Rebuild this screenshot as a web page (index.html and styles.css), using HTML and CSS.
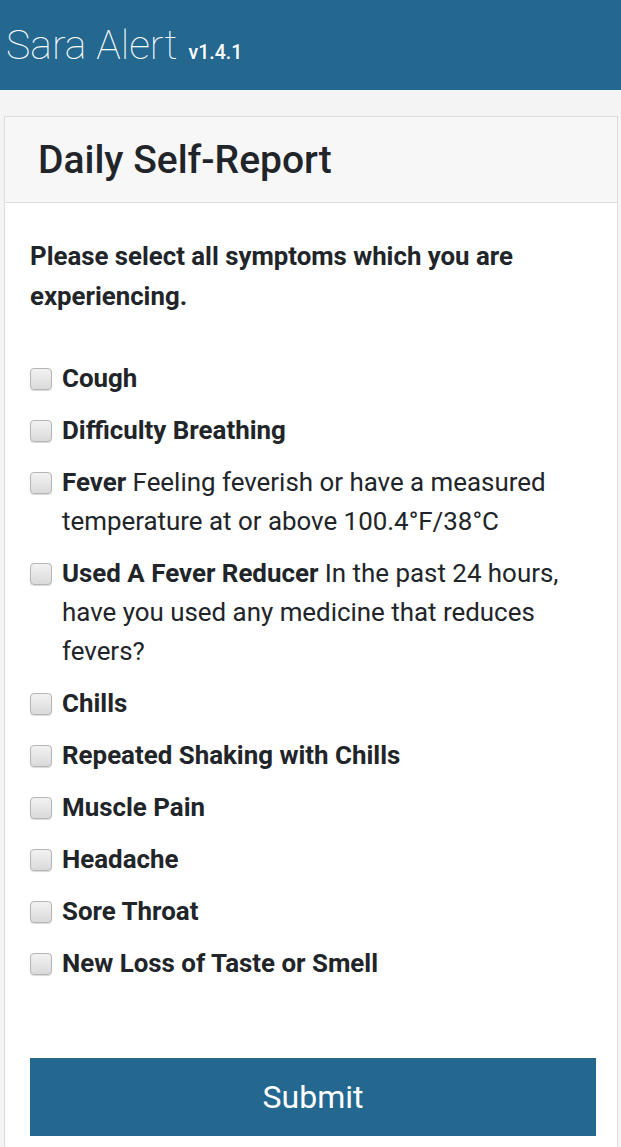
FILE: index.html
```html
<!DOCTYPE html>
<html lang="en">
<head>
    <meta charset="UTF-8" />
    <meta name="viewport" content="width=device-width, initial-scale=1.0" />
    <title>Sara Alert - Daily Self-Report</title>
    <link rel="stylesheet" href="styles.css">
</head>
<body>
    <nav class="navbar">
        <span class="brand">Sara Alert</span>
        <span class="version">v1.4.1</span>
    </nav>

    <div class="container">
        <div class="card">
            <div class="card-header">
                <h1>Daily Self-Report</h1>
            </div>
            <form class="card-body" id="reportForm">
                <p class="lead">Please select all symptoms which you are experiencing.</p>

                <label class="symptom"><input type="checkbox" name="cough" /><span><b>Cough</b></span></label>
                <label class="symptom"><input type="checkbox" name="difficulty-breathing" /><span><b>Difficulty Breathing</b></span></label>
                <label class="symptom"><input type="checkbox" name="fever" /><span><b>Fever</b> Feeling feverish or have a measured temperature at or above 100.4°F/38°C</span></label>
                <label class="symptom"><input type="checkbox" name="fever-reducer" /><span><b>Used A Fever Reducer</b> In the past 24 hours, have you used any medicine that reduces fevers?</span></label>
                <label class="symptom"><input type="checkbox" name="chills" /><span><b>Chills</b></span></label>
                <label class="symptom"><input type="checkbox" name="shaking" /><span><b>Repeated Shaking with Chills</b></span></label>
                <label class="symptom"><input type="checkbox" name="muscle-pain" /><span><b>Muscle Pain</b></span></label>
                <label class="symptom"><input type="checkbox" name="headache" /><span><b>Headache</b></span></label>
                <label class="symptom"><input type="checkbox" name="sore-throat" /><span><b>Sore Throat</b></span></label>
                <label class="symptom"><input type="checkbox" name="taste-smell" /><span><b>New Loss of Taste or Smell</b></span></label>

                <button type="submit" class="submit-btn">Submit</button>
            </form>
        </div>
    </div>
</body>
</html>
```

FILE: styles.css
```css
/* Global Styles */
body {
    font-family: Roboto, 'Noto Sans', sans-serif;
    background-color: #f4f4f4;
    color: #212529;
    margin: 0;
}

.navbar {
    background-color: #246890;
    height: 90px;
    display: flex;
    align-items: baseline;
    padding: 21px 0 0 6px;
    box-sizing: border-box;
    color: #fff;
}

.brand {
    font-size: 41px;
    font-weight: 100;
    margin-right: 11px;
}

.version {
    font-size: 19.5px;
    font-weight: 500;
}

.container {
    padding: 26px 3px 0 4px;
}

.card {
    background-color: #fff;
    border: 1px solid #ddd;
}

.card-header {
    background-color: #f7f7f7;
    border-bottom: 1px solid #ddd;
    height: 85px;
    display: flex;
    align-items: center;
    padding-left: 33px;
}

h1 {
    margin: 0;
    font-size: 39px;
    font-weight: 500;
    color: #212529;
}

.card-body {
    padding: 33px 21px 12px 25px;
}

.lead {
    margin: 0 0 43px;
    font-size: 25.8px;
    font-weight: 700;
    line-height: 40px;
}

.symptom {
    display: flex;
    align-items: flex-start;
    font-size: 25.9px;
    line-height: 39px;
    margin-bottom: 13px;
}

.symptom b {
    font-weight: 700;
}

.symptom input[type="checkbox"] {
    -webkit-appearance: none;
    appearance: none;
    flex: none;
    width: 22px;
    height: 22px;
    margin: 9px 10px 0 0;
    border: 1px solid #b5b5b5;
    border-radius: 4px;
    background: linear-gradient(#f2f2f2, #dadada);
    box-shadow: 0 1px 1px rgba(0, 0, 0, 0.15);
}

.submit-btn {
    display: block;
    width: 100%;
    height: 78px;
    margin-top: 75px;
    background-color: #246890;
    color: #fff;
    border: none;
    font-family: inherit;
    font-size: 32px;
    cursor: pointer;
}
```
